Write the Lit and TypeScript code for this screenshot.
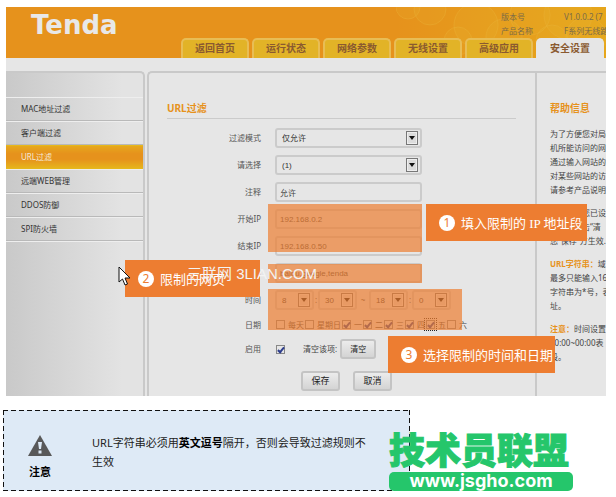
import { LitElement, html, css, svg } from "lit";
import { customElement, property } from "lit/decorators.js";
import { classMap } from "lit/directives/class-map.js";

const TABS = ["返回首页", "运行状态", "网络参数", "无线设置", "高级应用", "安全设置"];
const MENU = ["MAC地址过滤", "客户端过滤", "URL过滤", "远端WEB管理", "DDOS防御", "SPI防火墙"];
const DAYS = [
  { name: "每天", on: false },
  { name: "星期日", on: false },
  { name: "一", on: true },
  { name: "二", on: true },
  { name: "三", on: true },
  { name: "四", on: true },
  { name: "五", on: true, focus: true },
  { name: "六", on: false },
];
const BUBBLES = [
  [12, 0, 12], [34, 2, 16], [62, 34, 14], [80, 18, 22], [108, 30, 18],
  [134, 8, 20], [156, 34, 16], [172, 8, 24], [190, 30, 20],
];

@customElement("drop-box")
class DropBox extends LitElement {
  @property() value = "";
  @property() name = "";

  static styles = css`
    :host { display: block; }
    .wrap { position: relative; display: block; }
    .select {
      appearance: none; box-sizing: border-box; display: block; width: 100%; height: 20px;
      margin: 0; padding: 0 16px 0 5px; border: 2px solid #cbcbcb; border-radius: 3px;
      background: #e6e6e6; color: #333; font: 8px "Liberation Sans", "Noto Sans CJK SC", sans-serif;
    }
    .arrow {
      position: absolute; right: 4px; top: 3px; box-sizing: border-box; width: 12px; height: 14px;
      border: 1px solid #777; background: #dcdcdc; box-shadow: inset 0 0 0 1px #eee;
      display: grid; place-items: center; pointer-events: none;
    }
    .arrow::before {
      content: ""; border: 3px solid transparent; border-top: 4px solid #111; border-bottom: 0;
    }
  `;

  render() {
    return html`<span class="wrap">
      <select class="select" aria-label=${this.name}><option>${this.value}</option></select>
      <span class="arrow"></span>
    </span>`;
  }
}

@customElement("step-note")
class StepNote extends LitElement {
  @property() num = "";

  static styles = css`
    :host {
      display: flex; align-items: center; gap: 6px; box-sizing: border-box; height: 37px;
      padding-left: 13px; background: #ed7d31; color: #fff; white-space: nowrap;
      font: 13px "Noto Sans CJK SC", sans-serif;
    }
    .num {
      width: 16px; height: 16px; border-radius: 50%; background: #fff; color: #ed7d31;
      font: 12px/16px "Noto Sans", sans-serif; text-align: center;
    }
  `;

  render() {
    return html`<span class="num">${this.num}</span><span><slot></slot></span>`;
  }
}

@customElement("app-root")
class AppRoot extends LitElement {
  static styles = css`
    :host {
      display: block; overflow: hidden; background: #fff; color: #444;
      font: 8px/14px "Noto Sans", "Noto Sans CJK SC", sans-serif;
    }
    .shot { position: relative; margin: 7px 10px 0 6px; background: #e6e6e6; overflow: hidden; }
    .head { position: relative; background: #e6921c; overflow: hidden; }
    .bubbles { position: absolute; right: 0; top: 0; width: 210px; height: 51px; }
    .top { position: relative; display: flex; justify-content: space-between; height: 31px; }
    .logo {
      margin-left: 25px; color: #e8e8e8;
      font: bold 26px/36px "DejaVu Sans", sans-serif;
    }
    .info {
      display: grid; grid-template-columns: 63px 42px; margin: 0; padding-top: 3px;
      color: #7b6a48; white-space: nowrap; overflow: hidden;
    }
    .info dt, .info dd { margin: 0; }
    .tabs { position: relative; display: flex; justify-content: flex-end; gap: 3px; margin-right: 2px; }
    .tab {
      box-sizing: border-box; width: 68px; height: 20px; border: 2px solid #e8bd55; border-bottom: 0;
      border-radius: 5px 5px 0 0; background: #e2b327; color: #8a5a30; text-align: center;
      font: bold 10px/16px "Noto Sans CJK SC", sans-serif; text-decoration: none;
    }
    .tab.on { background: #e6e6e6; border-color: #e6e6e6; }
    .body { display: grid; grid-template-columns: 139px minmax(0, 1fr); gap: 2px; padding-top: 13px; }
    .side {
      border-top: 2px solid #c9c9c9; border-right: 2px solid #c9c9c9; border-radius: 0 5px 0 0;
      padding-top: 24px; background: linear-gradient(90deg, #c9c9c9, #e3e3e3 85%);
    }
    .item {
      display: block; box-sizing: border-box; height: 24px; padding-left: 15px; color: #333;
      border-top: 1px solid #eee; border-bottom: 1px solid #b9b9b9; line-height: 22px; text-decoration: none;
    }
    .item.on {
      color: #f4ead6; border-color: #e6b81c;
      background: linear-gradient(#e6a81c, #e6921c 35%, #e6921c 60%, #e6b41c);
    }
    .rest { border-top: 1px solid #eee; }
    .panel {
      display: grid; grid-template-columns: minmax(0, 1fr) 71px;
      border-top: 2px solid #c9c9c9; border-left: 2px solid #c9c9c9; border-radius: 5px 0 0 0;
    }
    .main { padding: 25px 19px 5px 18px; }
    .title {
      margin: 0; color: #e6921c; font: bold 10px/20px "Noto Sans", "Noto Sans CJK SC", sans-serif;
    }
    .main .title { border-bottom: 1px solid #cbcbcb; margin-bottom: 9px; }
    .form { display: grid; grid-template-columns: 94px 1fr; column-gap: 14px; row-gap: 7px; align-items: center; }
    .label { text-align: right; color: #555; }
    .field { width: 147px; }
    .text {
      box-sizing: border-box; display: block; height: 20px; margin: 0; padding: 0 3px;
      border: 2px solid #cbcbcb; border-radius: 3px; background: #e6e6e6; color: #444;
      font: 8px "Liberation Sans", "Noto Sans CJK SC", sans-serif;
    }
    .time, .days, .enable, .buttons { display: flex; align-items: center; }
    .time drop-box { flex: none; width: 39px; }
    .colon { width: 4px; text-align: center; }
    .tilde { width: 12px; text-align: center; }
    .days { gap: 1px; height: 15px; padding-left: 1px; }
    .day { display: flex; align-items: center; gap: 3px; white-space: nowrap; }
    .box {
      appearance: none; box-sizing: border-box; flex: none; display: grid; place-items: center;
      width: 9px; height: 9px; margin: 0; border: 1px solid #888; background: #e6e6e6;
    }
    .box:checked::before {
      content: ""; box-sizing: border-box; width: 4px; height: 7px; border: solid #2c3c8c;
      border-width: 0 2px 2px 0; transform: rotate(40deg);
    }
    .box.focus { outline: 1px dotted #222; outline-offset: 1px; }
    .enable { padding-left: 1px; }
    .clear { margin-left: 18px; }
    .btn {
      box-sizing: border-box; height: 20px; margin: 0; padding: 0; border: 2px solid #c4c4c4;
      border-radius: 3px; background: linear-gradient(#ececec, #d4d4d4); color: #222;
      font: 8px/14px "Noto Sans CJK SC", sans-serif;
    }
    .enable .btn { width: 36px; margin-left: 3px; }
    .buttons { gap: 13px; padding: 12px 0 0 134px; }
    .buttons .btn { width: 39px; font-size: 9px; }
    .help { border-left: 2px solid #c9c9c9; padding: 25px 0 0 13px; white-space: nowrap; overflow: hidden; }
    .help p { margin: 9px 0 0; }
    .key { color: #e6921c; }
    .mark { position: absolute; background: rgba(237, 125, 49, 0.7); pointer-events: none; }
    .mark.ip { left: 262px; top: 197px; width: 154px; height: 48px; }
    .mark.url { left: 262px; top: 257px; width: 154px; height: 19px; }
    .mark.when { left: 262px; top: 282px; width: 194px; height: 41px; }
    step-note { position: absolute; }
    .one { left: 420px; top: 197px; width: 161px; }
    .two { left: 119px; top: 253px; width: 135px; }
    .three { left: 382px; top: 329px; width: 167px; }
    .latin { font-family: "Liberation Serif", serif; }
    .water {
      position: absolute; left: 181px; top: 257px; color: #f3f3f3; white-space: nowrap;
      font: 15px/20px "Liberation Sans", "Noto Sans CJK SC", sans-serif;
    }
    .cursor { position: absolute; left: 112px; top: 259px; width: 13px; height: 20px; }
    .foot { position: relative; margin-top: 14px; padding-left: 3px; }
    .tip {
      box-sizing: border-box; max-width: 407px; display: grid; grid-template-columns: 48px 1fr;
      column-gap: 28px; align-items: center; padding: 23px 20px 9px 13px; color: #222;
      font: 11px/19px "Noto Sans", "Noto Sans CJK SC", sans-serif;
      background:
        repeating-linear-gradient(90deg, #111 0 5px, transparent 5px 8px) top / 100% 1px no-repeat,
        repeating-linear-gradient(90deg, #111 0 5px, transparent 5px 8px) bottom / 100% 1px no-repeat,
        repeating-linear-gradient(#111 0 5px, transparent 5px 8px) left / 1px 100% no-repeat,
        repeating-linear-gradient(#111 0 5px, transparent 5px 8px) right / 1px 100% no-repeat,
        #deeaf6;
    }
    .warn { text-align: center; font-weight: bold; color: #000; }
    .sign { display: block; width: 24px; height: 22px; margin: 1px auto 5px; }
    .tip p { margin: 0 0 11px; white-space: nowrap; }
    .tip b { color: #000; }
    .brand { position: absolute; left: 389px; top: 18px; color: #25c66b; }
    .name {
      display: block; height: 44px; font: 900 36px/40px "Noto Sans CJK SC", sans-serif;
      -webkit-text-stroke: 1px #25c66b; white-space: nowrap;
    }
    .site {
      display: block; width: 184px; height: 19px; border-radius: 5px; background: #25c66b; color: #fff;
      font: bold 18px/17px "Inter", sans-serif; text-align: center; text-decoration: none;
    }
  `;

  render() {
    return html`
      <div class="shot">
        <header class="head">
          <svg class="bubbles" viewBox="0 0 210 51" aria-hidden="true">
            <defs>
              <linearGradient id="glow"><stop offset="0" stop-color="#e6b41c" stop-opacity="0"/><stop offset="1" stop-color="#e6b41c" stop-opacity=".6"/></linearGradient>
            </defs>
            <rect width="210" height="51" fill="url(#glow)"/>
            ${BUBBLES.map(([x, y, r]) => svg`<circle cx=${x} cy=${y} r=${r} fill="#e6c03c" fill-opacity=".12" stroke="#eab53c" stroke-opacity=".35"/>`)}
          </svg>
          <div class="top">
            <div class="logo">Tenda</div>
            <dl class="info">
              <dt>版本号</dt><dd>V1.0.0.2 (7</dd>
              <dt>产品名称</dt><dd>F系列无线路</dd>
            </dl>
          </div>
          <nav class="tabs">
            ${TABS.map((t, i) => html`<a href="#" class=${classMap({ tab: true, on: i === 5 })}>${t}</a>`)}
          </nav>
        </header>
        <div class="body">
          <nav class="side">
            ${MENU.map((t, i) => html`<a href="#" class=${classMap({ item: true, on: i === 2 })}>${t}</a>`)}
            <div class="rest"></div>
          </nav>
          <div class="panel">
            <main class="main">
              <h1 class="title">URL过滤</h1>
              <div class="form">
                <span class="label">过滤模式</span><drop-box class="field" name="过滤模式" value="仅允许"></drop-box>
                <span class="label">请选择</span><drop-box class="field" name="请选择" value="(1)"></drop-box>
                <label class="label" for="memo">注释</label><input class="text field" id="memo" value="允许">
                <label class="label" for="from">开始IP</label><input class="text field" id="from" value="192.168.0.2">
                <label class="label" for="to">结束IP</label><input class="text field" id="to" value="192.168.0.50">
                <label class="label" for="url">URL字符串</label><input class="text field" id="url" value="baidu,google,tenda">
                <span class="label">时间</span>
                <div class="time">
                  <drop-box name="时间" value="8"></drop-box><span class="colon">:</span>
                  <drop-box name="时间" value="30"></drop-box><span class="tilde">~</span>
                  <drop-box name="时间" value="18"></drop-box><span class="colon">:</span>
                  <drop-box name="时间" value="0"></drop-box>
                </div>
                <span class="label">日期</span>
                <div class="days">
                  ${DAYS.map((d) => html`<label class="day"><input type="checkbox" class=${classMap({ box: true, focus: !!d.focus })} .checked=${d.on}>${d.name}</label>`)}
                </div>
                <label class="label" for="use">启用</label>
                <div class="enable">
                  <input type="checkbox" class="box" id="use" checked>
                  <span class="clear">清空该项:</span><button class="btn">清空</button>
                </div>
              </div>
              <div class="buttons"><button class="btn">保存</button><button class="btn">取消</button></div>
            </main>
            <aside class="help">
              <h2 class="title">帮助信息</h2>
              <p>为了方便您对局<br>机所能访问的网<br>通过输入网站的<br>对某些网站的访<br>请参考产品说明</p>
              <p>若要使用您已设<br>的规则点击“清<br>您“保存”方生效.</p>
              <p><b class="key">URL字符串：</b>域<br>最多只能输入16<br>字符串为*号，表<br>址。</p>
              <p><b class="key">注意：</b>时间设置<br>00:00~00:00表<br>段。</p>
            </aside>
          </div>
        </div>
        <div class="mark ip"></div>
        <div class="mark url"></div>
        <div class="mark when"></div>
        <step-note class="one" num="1">填入限制的<span class="latin"> IP </span>地址段</step-note>
        <step-note class="two" num="2">限制的网页</step-note>
        <step-note class="three" num="3">选择限制的时间和日期</step-note>
        <div class="water">三联网 3LIAN.COM</div>
        <svg class="cursor" viewBox="0 0 13 20" aria-hidden="true">
          <path d="M1 1V16L4.500 13L7 19L9.500 18L7 12H12Z" fill="#fff" stroke="#111"/>
        </svg>
      </div>
      <footer class="foot">
        <div class="tip">
          <div class="warn">
            <svg class="sign" viewBox="0 0 24 22" aria-hidden="true">
              <path d="M12 0L24 21H0Z" fill="#595959"/>
              <path d="M10 7H14L13 14H11ZM10.500 15.500H13.500V18.500H10.500Z" fill="#deeaf6"/>
            </svg>
            注意
          </div>
          <p>URL字符串必须用<b>英文逗号</b>隔开，否则会导致过滤规则不<br>生效</p>
        </div>
        <div class="brand">
          <span class="name">技术员联盟</span>
          <a class="site" href="#">www.jsgho.com</a>
        </div>
      </footer>
    `;
  }
}
